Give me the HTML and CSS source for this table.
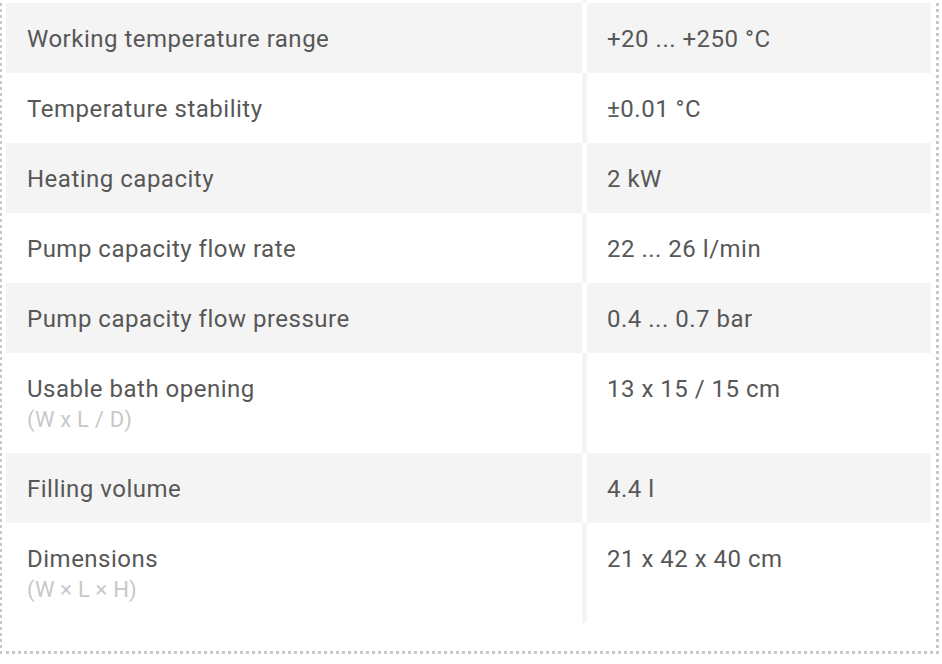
FILE: index.html
```html
<!DOCTYPE html>
<html lang="en">
<head>
<meta charset="utf-8">
<title>Specifications</title>
<link rel="stylesheet" href="styles.css">
</head>
<body>
<div class="specs">
  <div class="row row--white row--stub"><div class="cell"></div><div class="cell"></div></div>
  <div class="row row--gray"><div class="cell label">Working temperature range</div><div class="cell value">+20 ... +250 °C</div></div>
  <div class="row row--white"><div class="cell label">Temperature stability</div><div class="cell value">±0.01 °C</div></div>
  <div class="row row--gray"><div class="cell label">Heating capacity</div><div class="cell value">2 kW</div></div>
  <div class="row row--white"><div class="cell label">Pump capacity flow rate</div><div class="cell value">22 ... 26 l/min</div></div>
  <div class="row row--gray"><div class="cell label">Pump capacity flow pressure</div><div class="cell value">0.4 ... 0.7 bar</div></div>
  <div class="row row--white"><div class="cell label">Usable bath opening<span class="sub">(W x L / D)</span></div><div class="cell value">13 x 15 / 15 cm</div></div>
  <div class="row row--gray"><div class="cell label">Filling volume</div><div class="cell value">4.4 l</div></div>
  <div class="row row--white"><div class="cell label">Dimensions<span class="sub">(W × L × H)</span></div><div class="cell value">21 x 42 x 40 cm</div></div>
</div>
</body>
</html>
```
FILE: styles.css
```css
html, body {
  margin: 0;
  padding: 0;
  background: #fff;
}
body {
  font-family: Roboto, "Liberation Sans", Arial, sans-serif;
  color: #575757;
}
.specs {
  width: 925px;
  margin-left: -1px;
  margin-top: -3px;
  border: 3px dotted #c8c8c8;
  padding: 0 5px 28px 4px;
}
.row {
  display: grid;
  grid-template-columns: 576px 1fr;
  column-gap: 5px;
}
.row--gray { background: #fff; }
.row--gray .cell { background: #f4f4f4; }
.row--white { background: #f4f4f4; }
.row--white .cell { background: #fff; }
.row--stub { height: 3px; }
.cell {
  padding: 21px 20px 19px 21px;
  font-size: 24px;
  line-height: 30px;
  letter-spacing: 0.5px;
}
.row--stub .cell { padding: 0; }
.value { padding-left: 20px; }
.sub {
  display: block;
  font-size: 22px;
  line-height: 32px;
  margin-bottom: -2px;
  letter-spacing: 0.2px;
  color: #c8c8c8;
}
```
